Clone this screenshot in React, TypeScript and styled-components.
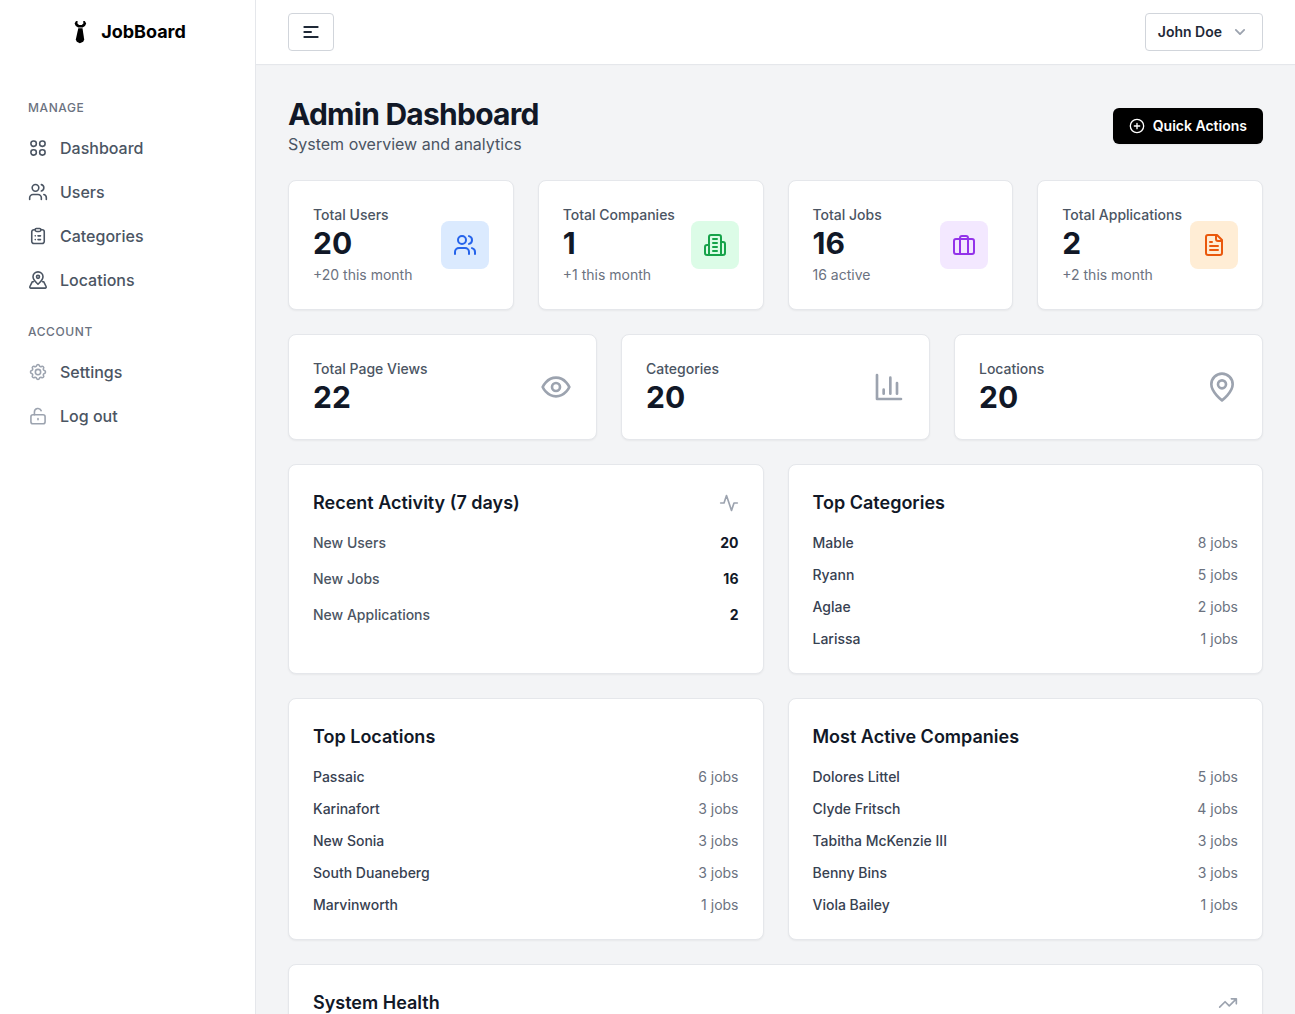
import React from "react";
import styled, { createGlobalStyle } from "styled-components";

const GlobalStyle = createGlobalStyle`
  *, *::before, *::after { box-sizing: border-box; }
  body {
    margin: 0;
    background: #f3f4f6;
    color: #111827;
    font-family: Inter, "Liberation Sans", sans-serif;
    font-size: 16px;
    line-height: 24px;
  }
  h1, h2, p, ul, dl, dd { margin: 0; padding: 0; }
  ul { list-style: none; }
  button { font-family: inherit; cursor: pointer; }
`;

/* ---------- Icons ---------- */

const Svg = styled.svg<{ $size: number; $stroke?: number }>`
  width: ${(p) => p.$size}px;
  height: ${(p) => p.$size}px;
  flex: none;
  fill: none;
  stroke: currentColor;
  stroke-width: ${(p) => p.$stroke ?? 2};
  stroke-linecap: round;
  stroke-linejoin: round;
`;

type IconName =
  | "grid" | "users" | "clipboard" | "mapPin" | "settings" | "unlock"
  | "menu" | "chevron" | "plus" | "building" | "briefcase" | "file"
  | "eye" | "chart" | "pin" | "activity" | "trending";

const shapes: Record<IconName, React.ReactNode> = {
  grid: (
    <>
      <rect x="3.500" y="3.500" width="6.500" height="6.500" rx="3" />
      <rect x="14" y="3.500" width="6.500" height="6.500" rx="3" />
      <rect x="3.500" y="14" width="6.500" height="6.500" rx="3" />
      <rect x="14" y="14" width="6.500" height="6.500" rx="3" />
    </>
  ),
  users: (
    <>
      <path d="M16 21v-2a4 4 0 0 0-4-4H6a4 4 0 0 0-4 4v2" />
      <circle cx="9" cy="7" r="4" />
      <path d="M22 21v-2a4 4 0 0 0-3-3.87" />
      <path d="M16 3.13a4 4 0 0 1 0 7.75" />
    </>
  ),
  clipboard: (
    <>
      <path d="M8.500 4.500H7a2.500 2.500 0 0 0-2.500 2.500v11.500A2.500 2.500 0 0 0 7 21h10a2.500 2.500 0 0 0 2.500-2.500V7A2.500 2.500 0 0 0 17 4.500h-1.500" />
      <path d="M8.500 4.500a1.500 1.500 0 0 1 1.500-1.500h4a1.500 1.500 0 0 1 1.500 1.500A2 2 0 0 1 13.500 6.500h-3a2 2 0 0 1-2-2Z" />
      <path d="M12 11.800H15M12 16.300H15M8.700 11.800h.01M8.700 16.300h.01" />
    </>
  ),
  mapPin: (
    <>
      <path d="M18 8.200c0 3.800-3.200 6-6 8.800-2.800-2.800-6-5-6-8.800a6 6 0 0 1 12 0Z" />
      <circle cx="12" cy="8.200" r="1.800" />
      <path d="M6.500 14H5.200L2.300 19.800a1.300 1.300 0 0 0 1.200 1.900h17a1.300 1.300 0 0 0 1.200-1.900L18.800 14H17.500" />
    </>
  ),
  settings: (
    <>
      <path d="M10.325 4.317c.426-1.756 2.924-1.756 3.350 0a1.724 1.724 0 0 0 2.573 1.066c1.543-.94 3.310.826 2.370 2.370a1.724 1.724 0 0 0 1.065 2.572c1.756.426 1.756 2.924 0 3.350a1.724 1.724 0 0 0-1.066 2.573c.94 1.543-.826 3.310-2.370 2.370a1.724 1.724 0 0 0-2.572 1.065c-.426 1.756-2.924 1.756-3.350 0a1.724 1.724 0 0 0-2.573-1.066c-1.543.94-3.310-.826-2.370-2.370a1.724 1.724 0 0 0-1.065-2.572c-1.756-.426-1.756-2.924 0-3.350a1.724 1.724 0 0 0 1.066-2.573c-.94-1.543.826-3.310 2.370-2.370 1 .608 2.296.07 2.572-1.065z" />
      <circle cx="12" cy="12" r="3.200" />
    </>
  ),
  unlock: (
    <>
      <rect x="3.500" y="10.500" width="17" height="10.800" rx="2.500" />
      <path d="M7.700 10.500V7.200a4.200 4.200 0 0 1 8.100-1.600M12 15v1.500" />
    </>
  ),
  menu: <path d="M4 6h16M4 12h8M4 18h16" />,
  chevron: <path d="m7 9.500 5 5 5-5" />,
  plus: (
    <>
      <circle cx="12" cy="12" r="10" />
      <path d="M8 12h8M12 8v8" />
    </>
  ),
  building: (
    <>
      <path d="M6 22V4a2 2 0 0 1 2-2h8a2 2 0 0 1 2 2v18Z" />
      <path d="M6 12H4a2 2 0 0 0-2 2v6a2 2 0 0 0 2 2h2" />
      <path d="M18 9h2a2 2 0 0 1 2 2v9a2 2 0 0 1-2 2h-2" />
      <path d="M10 6h4M10 10h4M10 14h4M10 18h4" />
    </>
  ),
  briefcase: (
    <>
      <rect x="2" y="6" width="20" height="15" rx="2" />
      <path d="M16 21V5a2 2 0 0 0-2-2h-4a2 2 0 0 0-2 2v16" />
    </>
  ),
  file: (
    <>
      <path d="M15 2H6a2 2 0 0 0-2 2v16a2 2 0 0 0 2 2h12a2 2 0 0 0 2-2V7Z" />
      <path d="M14 2v4a2 2 0 0 0 2 2h4" />
      <path d="M10 9H8M16 13H8M16 17H8" />
    </>
  ),
  eye: (
    <>
      <path d="M2 12s3-7 10-7 10 7 10 7-3 7-10 7-10-7-10-7Z" />
      <circle cx="12" cy="12" r="3" />
    </>
  ),
  chart: <path d="M3 3v18h18M18 17V9M13 17V5M8 17v-3" />,
  pin: (
    <>
      <path d="M20 10c0 6-8 12-8 12s-8-6-8-12a8 8 0 0 1 16 0Z" />
      <circle cx="12" cy="10" r="3" />
    </>
  ),
  activity: <path d="M22 12h-4l-3 9L9 3l-3 9H2" />,
  trending: <path d="m22 7-8.500 8.500-5-5L2 17M16 7h6v6" />,
};

function Icon({ name, size, stroke }: { name: IconName; size: number; stroke?: number }) {
  return (
    <Svg viewBox="0 0 24 24" $size={size} $stroke={stroke} aria-hidden="true">
      {shapes[name]}
    </Svg>
  );
}

const TieMark = styled.svg`
  width: 24px;
  height: 24px;
  fill: #000;
`;

function Tie() {
  return (
    <TieMark viewBox="0 0 24 24" aria-hidden="true">
      <path d="M7 1 8.800 1.300 8.300 3.300 10 5h2.800L14.500 3.300 14 1.300 15.800 1 17.200 3.500 16 6 13.600 7.500H9.200L6.800 6 5.600 3.500Z" />
      <path d="M9.300 8.300h4.200l1.700 11.200-1 2.300-3.400 1.400L7.800 21.800 6.800 19.500Z" />
    </TieMark>
  );
}

/* ---------- Shell ---------- */

const Shell = styled.div`
  display: flex;
  height: 100vh;
  overflow: hidden;
`;

const Sidebar = styled.aside`
  flex: 0 0 256px;
  background: #fff;
  border-right: 1px solid #e5e7eb;
`;

const Brand = styled.a`
  display: flex;
  align-items: center;
  justify-content: center;
  gap: 8px;
  height: 64px;
  color: #000;
  font-size: 18px;
  font-weight: 700;
  line-height: 28px;
  text-decoration: none;
`;

const Nav = styled.nav`
  display: flex;
  flex-direction: column;
  gap: 24px;
  padding: 36px 16px;
`;

const NavHeading = styled.h2`
  padding: 0 12px;
  color: #6b7280;
  font-size: 12px;
  font-weight: 500;
  line-height: 16px;
  letter-spacing: 0.05em;
  text-transform: uppercase;
`;

const NavList = styled.ul`
  display: grid;
  gap: 4px;
  margin-top: 12px;
`;

const NavLink = styled.a`
  display: flex;
  align-items: center;
  gap: 12px;
  height: 40px;
  padding: 0 12px;
  border-radius: 6px;
  color: #4b5563;
  font-weight: 500;
  text-decoration: none;
`;

const NavIcon = styled.span<{ $muted?: boolean }>`
  display: flex;
  color: ${(p) => (p.$muted ? "#9ca3af" : "#4b5563")};
`;

const Content = styled.div`
  display: flex;
  flex: 1;
  flex-direction: column;
  min-width: 0;
`;

const TopBar = styled.header`
  display: flex;
  flex: none;
  align-items: center;
  justify-content: space-between;
  height: 64px;
  padding: 0 32px;
  background: #fff;
  box-shadow: 0 1px 1px #e5e7eb;
  z-index: 1;
`;

const OutlineButton = styled.button`
  display: flex;
  align-items: center;
  gap: 8px;
  height: 38px;
  padding: 0 12px;
  border: 1px solid #d1d5db;
  border-radius: 4px;
  background: #fff;
  color: #1f2937;
  font-size: 14px;
  font-weight: 600;
  line-height: 20px;
`;

const Faded = styled.span`
  display: flex;
  color: #9ca3af;
`;

const Main = styled.main`
  display: flex;
  flex: 1;
  flex-direction: column;
  gap: 24px;
  min-height: 0;
  padding: 32px;
  overflow-y: auto;
  scrollbar-width: none;
`;

const PageHead = styled.div`
  display: flex;
  align-items: center;
  justify-content: space-between;
`;

const Title = styled.h1`
  font-size: 30px;
  font-weight: 700;
  line-height: 36px;
  letter-spacing: -0.025em;
`;

const Subtitle = styled.p`
  color: #4b5563;
`;

const PrimaryButton = styled.button`
  display: flex;
  align-items: center;
  gap: 8px;
  height: 36px;
  padding: 0 16px;
  border: 0;
  border-radius: 6px;
  background: #000;
  box-shadow: 0 1px 2px rgba(0, 0, 0, 0.05);
  color: #fff;
  font-size: 14px;
  font-weight: 600;
  line-height: 20px;
`;

/* ---------- Cards ---------- */

const Grid = styled.div<{ $cols: number }>`
  display: grid;
  flex: none;
  grid-template-columns: repeat(${(p) => p.$cols}, minmax(0, 1fr));
  gap: 24px;
`;

const Card = styled.section`
  flex: none;
  padding: 24px;
  border: 1px solid #e5e7eb;
  border-radius: 8px;
  background: #fff;
  box-shadow: 0 1px 2px rgba(0, 0, 0, 0.05);
`;

const StatCard = styled(Card)`
  display: flex;
  align-items: center;
  justify-content: space-between;
`;

const HealthCard = styled(Card)`
  min-height: 160px;
`;

const StatLabel = styled.p`
  color: #4b5563;
  font-size: 14px;
  font-weight: 500;
  line-height: 20px;
  white-space: nowrap;
`;

const StatValue = styled.p`
  font-size: 30px;
  font-weight: 700;
  line-height: 36px;
`;

const StatNote = styled.p`
  margin-top: 4px;
  color: #6b7280;
  font-size: 14px;
  line-height: 20px;
`;

const IconTile = styled.span<{ $bg: string; $fg: string }>`
  display: flex;
  flex: none;
  padding: 12px;
  border-radius: 8px;
  background: ${(p) => p.$bg};
  color: ${(p) => p.$fg};
`;

const CardHead = styled.div`
  display: flex;
  align-items: center;
  justify-content: space-between;
`;

const CardTitle = styled.h2`
  font-size: 18px;
  font-weight: 600;
  line-height: 28px;
`;

const Rows = styled.dl<{ $gap: number }>`
  display: grid;
  gap: ${(p) => p.$gap}px;
  margin-top: 16px;
`;

const ActivityRows = styled(Rows)`
  align-content: start;
`;

const Row = styled.div`
  display: flex;
  justify-content: space-between;
  font-size: 14px;
  line-height: 20px;
`;

const RowName = styled.dt<{ $soft?: boolean }>`
  color: ${(p) => (p.$soft ? "#4b5563" : "#374151")};
  font-weight: 500;
`;

const RowCount = styled.dd<{ $strong?: boolean }>`
  color: ${(p) => (p.$strong ? "#111827" : "#6b7280")};
  font-weight: ${(p) => (p.$strong ? 700 : 400)};
`;

/* ---------- Data ---------- */

type NavItem = { label: string; icon: IconName; muted?: boolean };

const navSections: { title: string; items: NavItem[] }[] = [
  {
    title: "Manage",
    items: [
      { label: "Dashboard", icon: "grid" },
      { label: "Users", icon: "users" },
      { label: "Categories", icon: "clipboard" },
      { label: "Locations", icon: "mapPin" },
    ],
  },
  {
    title: "Account",
    items: [
      { label: "Settings", icon: "settings", muted: true },
      { label: "Log out", icon: "unlock", muted: true },
    ],
  },
];

const totals: { label: string; value: number; note: string; icon: IconName; bg: string; fg: string }[] = [
  { label: "Total Users", value: 20, note: "+20 this month", icon: "users", bg: "#dbeafe", fg: "#2563eb" },
  { label: "Total Companies", value: 1, note: "+1 this month", icon: "building", bg: "#dcfce7", fg: "#16a34a" },
  { label: "Total Jobs", value: 16, note: "16 active", icon: "briefcase", bg: "#f3e8ff", fg: "#9333ea" },
  { label: "Total Applications", value: 2, note: "+2 this month", icon: "file", bg: "#ffedd5", fg: "#ea580c" },
];

const counters: { label: string; value: number; icon: IconName }[] = [
  { label: "Total Page Views", value: 22, icon: "eye" },
  { label: "Categories", value: 20, icon: "chart" },
  { label: "Locations", value: 20, icon: "pin" },
];

const activity: [string, number][] = [["New Users", 20], ["New Jobs", 16], ["New Applications", 2]];

const topCategories: [string, number][] = [["Mable", 8], ["Ryann", 5], ["Aglae", 2], ["Larissa", 1]];

const topLocations: [string, number][] = [
  ["Passaic", 6], ["Karinafort", 3], ["New Sonia", 3], ["South Duaneberg", 3], ["Marvinworth", 1],
];

const topCompanies: [string, number][] = [
  ["Dolores Littel", 5], ["Clyde Fritsch", 4], ["Tabitha McKenzie III", 3], ["Benny Bins", 3], ["Viola Bailey", 1],
];

function RankingCard({ title, entries }: { title: string; entries: [string, number][] }) {
  return (
    <Card>
      <CardTitle>{title}</CardTitle>
      <Rows $gap={12}>
        {entries.map(([name, jobs]) => (
          <Row key={name}>
            <RowName>{name}</RowName>
            <RowCount>{`${jobs} jobs`}</RowCount>
          </Row>
        ))}
      </Rows>
    </Card>
  );
}

export default function App() {
  return (
    <Shell>
      <GlobalStyle />
      <Sidebar>
        <Brand href="#home">
          <Tie />
          JobBoard
        </Brand>
        <Nav>
          {navSections.map((section) => (
            <div key={section.title}>
              <NavHeading>{section.title}</NavHeading>
              <NavList>
                {section.items.map((item) => (
                  <li key={item.label}>
                    <NavLink href={`#${item.icon}`}>
                      <NavIcon $muted={item.muted}>
                        <Icon name={item.icon} size={20} stroke={1.9} />
                      </NavIcon>
                      {item.label}
                    </NavLink>
                  </li>
                ))}
              </NavList>
            </div>
          ))}
        </Nav>
      </Sidebar>

      <Content>
        <TopBar>
          <OutlineButton type="button" aria-label="Toggle sidebar">
            <Icon name="menu" size={20} stroke={2.4} />
          </OutlineButton>
          <OutlineButton type="button" aria-haspopup="menu">
            John Doe
            <Faded>
              <Icon name="chevron" size={20} stroke={2.2} />
            </Faded>
          </OutlineButton>
        </TopBar>

        <Main>
          <PageHead>
            <div>
              <Title>Admin Dashboard</Title>
              <Subtitle>System overview and analytics</Subtitle>
            </div>
            <PrimaryButton type="button">
              <Icon name="plus" size={16} />
              Quick Actions
            </PrimaryButton>
          </PageHead>

          <Grid $cols={4}>
            {totals.map((t) => (
              <StatCard key={t.label}>
                <div>
                  <StatLabel>{t.label}</StatLabel>
                  <StatValue>{t.value}</StatValue>
                  <StatNote>{t.note}</StatNote>
                </div>
                <IconTile $bg={t.bg} $fg={t.fg}>
                  <Icon name={t.icon} size={24} />
                </IconTile>
              </StatCard>
            ))}
          </Grid>

          <Grid $cols={3}>
            {counters.map((c) => (
              <StatCard key={c.label}>
                <div>
                  <StatLabel>{c.label}</StatLabel>
                  <StatValue>{c.value}</StatValue>
                </div>
                <Faded>
                  <Icon name={c.icon} size={32} />
                </Faded>
              </StatCard>
            ))}
          </Grid>

          <Grid $cols={2}>
            <Card>
              <CardHead>
                <CardTitle>Recent Activity (7 days)</CardTitle>
                <Faded>
                  <Icon name="activity" size={20} />
                </Faded>
              </CardHead>
              <ActivityRows $gap={16}>
                {activity.map(([name, count]) => (
                  <Row key={name}>
                    <RowName $soft>{name}</RowName>
                    <RowCount $strong>{count}</RowCount>
                  </Row>
                ))}
              </ActivityRows>
            </Card>
            <RankingCard title="Top Categories" entries={topCategories} />
            <RankingCard title="Top Locations" entries={topLocations} />
            <RankingCard title="Most Active Companies" entries={topCompanies} />
          </Grid>

          <HealthCard>
            <CardHead>
              <CardTitle>System Health</CardTitle>
              <Faded>
                <Icon name="trending" size={20} />
              </Faded>
            </CardHead>
          </HealthCard>
        </Main>
      </Content>
    </Shell>
  );
}
